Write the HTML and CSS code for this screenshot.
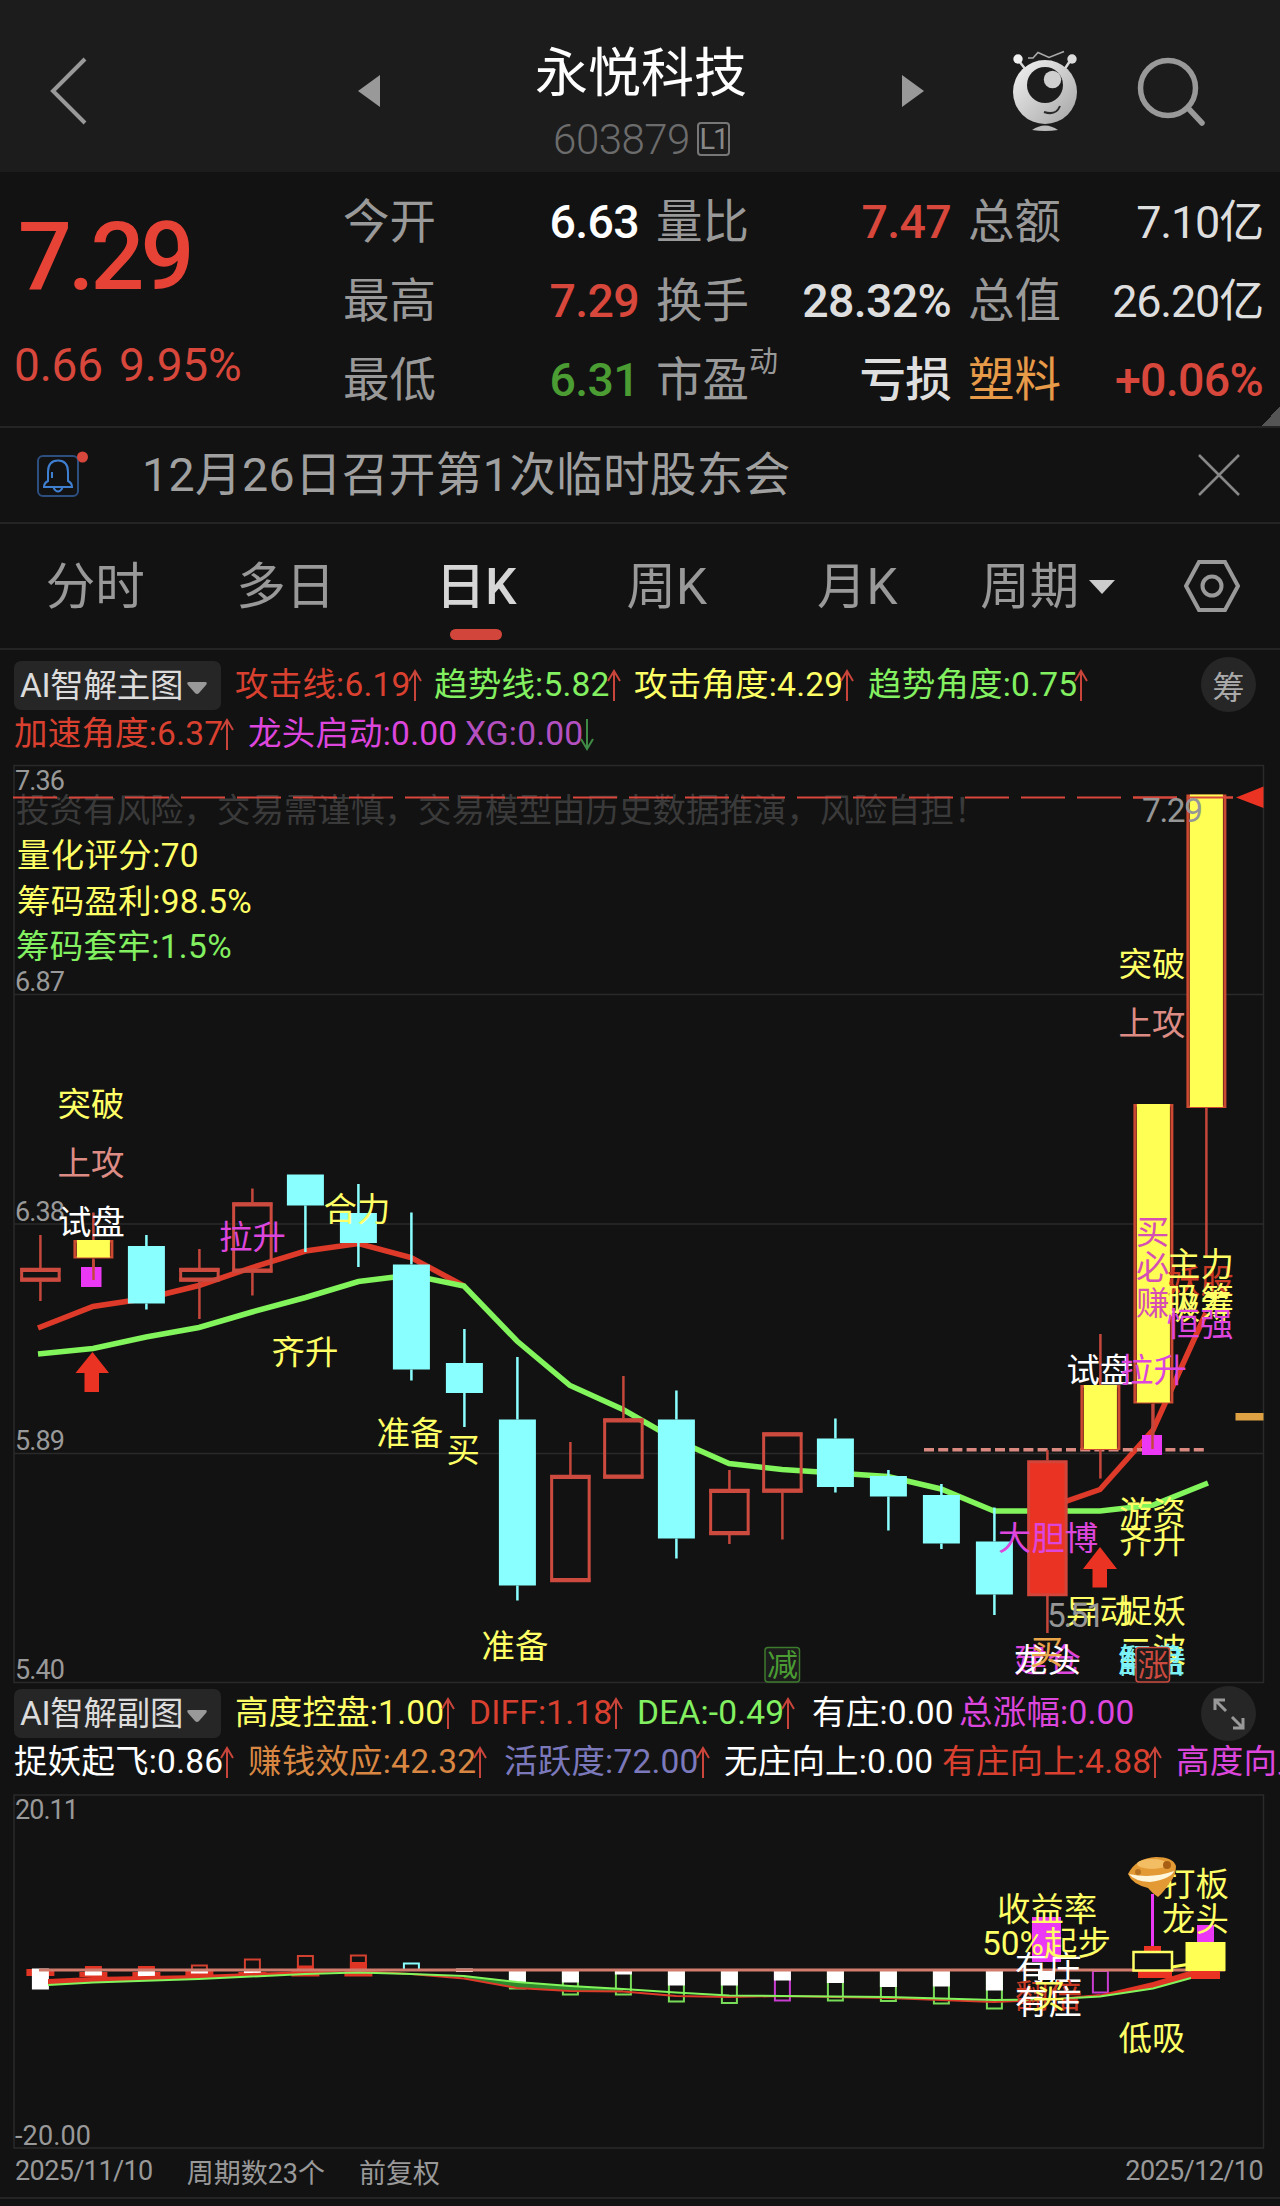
FILE: index.html
```html
<!DOCTYPE html>
<html lang="zh-CN">
<head>
  <meta charset="UTF-8">
  <title>永悦科技 603879</title>
  <link rel="stylesheet" href="styles.css">
</head>
<body>
  <header class="topbar">
    <svg class="back" width="40" height="70" viewBox="0 0 40 70"><path d="M36 3 L4 35 L36 67"/></svg>
    <svg class="prev" width="24" height="34" viewBox="0 0 24 34"><path d="M23 1 L1 17 L23 33Z"/></svg>
    <div class="stock">
      <h1>永悦科技</h1>
      <div class="code">603879<span class="level">L1</span></div>
    </div>
    <svg class="next" width="24" height="34" viewBox="0 0 24 34"><path d="M1 1 L23 17 L1 33Z"/></svg>
    <svg class="robot" width="70" height="84" viewBox="1010 48 70 84">
      <defs>
        <linearGradient id="body" x1="0" y1="0" x2="1" y2="1">
          <stop offset="0" stop-color="#f4f4f4"/>
          <stop offset="1" stop-color="#a4a4a4"/>
        </linearGradient>
      </defs>
      <path d="M1018 61 L1025 70 M1069 61 L1063 70" stroke="#d8d8d8" stroke-width="2.5"/>
      <circle cx="1017" cy="59" r="4.7" fill="#f0f0f0"/>
      <circle cx="1071" cy="59" r="4.7" fill="#dcdcdc"/>
      <path d="M1027 58 H1032 L1037 52.5 L1048 57.5 L1063 51.5" fill="none" stroke="#aaa" stroke-width="1.6"/>
      <circle cx="1044" cy="92" r="32" fill="url(#body)"/>
      <circle cx="1044" cy="85" r="18" fill="#1c1c1c"/>
      <circle cx="1051.500" cy="79.500" r="8.700" fill="#cfcfcf"/>
      <path d="M1043 112 Q1055 116 1059 106" fill="none" stroke="#2a2a2a" stroke-width="2"/>
      <path d="M1031 130 Q1044 121 1057 130 Q1044 132 1031 130Z" fill="#bbb"/>
    </svg>
    <svg class="search" width="70" height="70" viewBox="0 0 70 70"><circle cx="31" cy="31" r="27.500"/><path d="M51 51 L65 66"/></svg>
  </header>

  <section class="quote">
    <div class="price">
      <div class="now">7.29</div>
      <div class="change">0.66 9.95%</div>
    </div>
    <dl class="stats">
      <div><dt>今开</dt><dd class="white">6.63</dd></div>
      <div><dt>量比</dt><dd class="up">7.47</dd></div>
      <div><dt>总额</dt><dd class="big">7.10亿</dd></div>
      <div><dt>最高</dt><dd class="up">7.29</dd></div>
      <div><dt>换手</dt><dd>28.32%</dd></div>
      <div><dt>总值</dt><dd class="big">26.20亿</dd></div>
      <div><dt>最低</dt><dd class="down">6.31</dd></div>
      <div><dt>市盈<sup>动</sup></dt><dd>亏损</dd></div>
      <div><dt class="industry">塑料</dt><dd class="up">+0.06%</dd></div>
    </dl>
    <i class="corner"></i>
  </section>

  <section class="notice">
    <svg class="bell" width="54" height="50" viewBox="0 0 54 50">
      <rect x="2" y="6" width="40" height="40" rx="5" stroke="#2c4f80"/>
      <path d="M8 37 H36 Q36 33 32 31 V22 Q32 10.500 22 10.500 Q12 10.500 12 22 V31 Q8 33 8 37Z M17.500 38 Q22 45 26.500 38 M16 22 V28" stroke="#3f7fd0"/>
      <circle cx="46.500" cy="7" r="5.500" class="dot"/>
    </svg>
    <p>12月26日召开第1次临时股东会</p>
    <svg class="close" width="42" height="42" viewBox="0 0 42 42"><path d="M1 1 L41 41 M41 1 L1 41"/></svg>
  </section>

  <nav class="tabs">
    <a>分时</a>
    <a>多日</a>
    <a class="active">日K</a>
    <a>周K</a>
    <a>月K</a>
    <a>周期<i class="caret"></i></a>
    <svg width="56" height="52" viewBox="0 0 56 52"><path d="M15 2 H41 L54 26 L41 50 H15 L2 26Z"/><circle cx="28" cy="26" r="9.500"/></svg>
  </nav>

  <section class="indicator">
    <button class="pick">AI智解主图<svg width="22" height="14" viewBox="0 0 22 14"><path d="M3 1 H19 Q22 1 20 4 L13 12 Q11 14 9 12 L2 4 Q0 1 3 1Z"/></svg></button>
    <div class="row first">
      <span class="red w199">攻击线:6.19<b class="ar"></b></span>
      <span class="green w200">趋势线:5.82<b class="ar"></b></span>
      <span class="yellow w234">攻击角度:4.29<b class="ar"></b></span>
      <span class="green">趋势角度:0.75<b class="ar"></b></span>
    </div>
    <div class="row">
      <span class="red w234">加速角度:6.37<b class="ar"></b></span>
      <span class="magenta w217">龙头启动:0.00</span>
      <span class="purple">XG:0.00<b class="ar dn"></b></span>
    </div>
    <span class="round">筹</span>
  </section>

  <svg class="chart" id="main" width="1280" height="920" viewBox="0 764 1280 920">
    <g class="grid">
      <path d="M14 765.500 H1263.500 V1682.500 H14Z M14 994.500 H1263 M14 1224 H1263 M14 1453.500 H1263"/>
    </g>
    <g class="axis">
      <text x="15" y="790" textLength="50">7.36</text>
      <text x="15" y="991" textLength="50">6.87</text>
      <text x="15" y="1221" textLength="50">6.38</text>
      <text x="15" y="1450" textLength="50">5.89</text>
      <text x="15" y="1679" textLength="50">5.40</text>
    </g>
    <text class="risk" x="16" y="822">投资有风险，交易需谨慎，交易模型由历史数据推演，风险自担！</text>
    <path class="last" d="M13 797.500 H1233"/>
    <g class="score yellow">
      <text x="17" y="867">量化评分:70</text>
      <text x="17" y="912.500">筹码盈利:98.5%</text>
      <text x="16" y="958" class="green">筹码套牢:1.5%</text>
    </g>
    <path class="ma red-line" d="M38 1328 L93 1306.500 L146 1298.500 L199 1285.500 L252 1267.500 L305.500 1251 L358.500 1243.500 L411 1257.500 L464 1286"/>
    <path class="ma red-line" d="M1047 1513 V1508 L1100 1489.500 L1153 1430 L1206 1313"/>
    <path class="ma green-line" d="M38 1354 L93 1348.500 L146 1337 L199 1327.500 L252 1312 L305.500 1297.500 L358.500 1281.500 L411 1275 L464 1286 L517 1341 L570 1385.500 L623 1409.500 L676 1440 L729 1463.500 L782 1469.500 L835 1473 L888 1476.500 L941 1489 L994 1511 H1100 L1153 1505 L1208 1483"/>
    <g class="band"><path d="M924 1449.700 H1205"/></g>
    <g id="candles"></g>
    <g class="magenta-fill">
      <path d="M81 1267 H101.500 V1287 H81Z M1142 1435 H1162 V1455 H1142Z"/>
    </g>
    <path class="wick" d="M93.500 1260 V1280 M1152.500 1404 V1449"/>
    <path class="last" d="M1125 797.500 H1233" stroke-dashoffset="48"/>
    <g class="signal">
      <path d="M92.500 1352 L109 1373 H99 V1392 H84.500 V1373 H75.500Z"/>
      <path d="M1100 1547 L1117 1569 H1107 V1587.500 H1092.500 V1569 H1083Z"/>
      <path d="M1236 797.500 L1263.500 786.500 V808Z"/>
    </g>
    <path class="tick" d="M1235.500 1413 H1263.500 V1420.500 H1235.500Z"/>

    <g class="yellow">
      <text x="57.500" y="1116">突破</text>
      <text x="323.500" y="1221">合力</text>
      <text x="271.500" y="1364">齐升</text>
      <text x="376.500" y="1445">准备</text>
      <text x="446.500" y="1462">买</text>
      <text x="481.500" y="1658">准备</text>
      <text x="1118.500" y="976">突破</text>
      <text x="1119" y="1525">游资</text>
      <text x="1119" y="1553">齐升</text>
      <text x="1066" y="1623">异动</text>
      <text x="1119" y="1623">捉妖</text>
      <text x="1119" y="1662">二波</text>
    </g>
    <g class="pink">
      <text x="57.500" y="1175">上攻</text>
      <text x="1118.500" y="1035">上攻</text>
    </g>
    <g class="white-text">
      <text x="58" y="1234">试盘</text>
      <text x="1066.500" y="1381.500">试盘</text>
    </g>
    <g class="magenta">
      <text x="219" y="1249">拉升</text>
      <text x="1120" y="1382">拉升</text>
      <text x="998" y="1549.500">大胆博</text>
    </g>
    <g class="on-bar">
      <text x="1136" y="1244">买</text>
      <text x="1136" y="1279">必</text>
      <text x="1136" y="1315">赚</text>
    </g>
    <text class="red-text" x="1167" y="1293">妖股</text>
    <g class="yellow">
      <text x="1167" y="1276">主力</text>
      <text x="1167" y="1311">吸筹</text>
      <text x="1167" y="1319">吸筹</text>
    </g>
    <text class="magenta" x="1166.500" y="1336">恒强</text>
    <text class="tip" x="1142" y="822" textLength="61">7.29</text>
    <text class="tip" x="1047" y="1627" textLength="58">5.51</text>
    <text class="magenta" x="1014" y="1672">建仓</text>
    <text class="white-text" x="1014" y="1672">龙头</text>
    <text class="orange-text" x="1030" y="1664">买</text>
    <text class="cyan-text" x="1118" y="1672">解盘</text>
    <text class="cyan-text" x="1119" y="1673">翻倍</text>
    <g class="badge minus"><rect x="765" y="1647.500" width="34.500" height="34.500" rx="3"/><text x="767" y="1676">减</text></g>
    <g class="badge plus"><rect x="1136" y="1647.500" width="33.500" height="34.500" rx="3"/><text x="1137.500" y="1676">涨</text></g>
  </svg>

  <section class="indicator sub">
    <button class="pick">AI智解副图<svg width="22" height="14" viewBox="0 0 22 14"><path d="M3 1 H19 Q22 1 20 4 L13 12 Q11 14 9 12 L2 4 Q0 1 3 1Z"/></svg></button>
    <div class="row first">
      <span class="yellow w234">高度控盘:1.00<b class="ar"></b></span>
      <span class="red w168">DIFF:1.18<b class="ar"></b></span>
      <span class="green w174">DEA:-0.49<b class="ar"></b></span>
      <span class="white w147">有庄:0.00</span>
      <span class="magenta">总涨幅:0.00</span>
    </div>
    <div class="row">
      <span class="white w234">捉妖起飞:0.86<b class="ar"></b></span>
      <span class="orange w256">赚钱效应:42.32<b class="ar"></b></span>
      <span class="blue w220">活跃度:72.00<b class="ar"></b></span>
      <span class="white w218">无庄向上:0.00</span>
      <span class="red w234">有庄向上:4.88<b class="ar"></b></span>
      <span class="magenta">高度向上:0.00</span>
    </div>
    <span class="round"><svg width="32" height="32" viewBox="0 0 32 32"><path d="M2 12 V2 H12 M3 3 L13 13 M30 20 V30 H20 M29 29 L19 19"/></svg></span>
  </section>

  <svg class="chart" id="sub" width="1280" height="356" viewBox="0 1794 1280 356">
    <g class="grid"><path d="M14 1795 H1263.500 V2148 H14Z"/></g>
    <g class="axis">
      <text x="15" y="1819" textLength="64">20.11</text>
      <text x="15" y="2145" textLength="76">-20.00</text>
    </g>
    <g id="bars"></g>
    <path class="fill-up" d="M48 1979 L93 1977 L199 1975 L252 1973 L305 1971 L358 1970.500 L305 1974 L199 1979 L93 1982.500 L48 1985Z M1047 2000 L1100 1994.500 L1153 1982 L1206 1966 L1225 1970 L1191 1978 L1153 1988.500 L1100 1996.500Z"/>
    <path class="fill-down" d="M464 1976 L517 1982 L570 1986 L623 1989 V1992 L570 1991 L517 1988 L464 1978.500Z"/>
    <path class="thin red-line" d="M358 1971 L411 1974 L464 1978.500 L517 1988 L570 1991 L623 1991.500 L676 1996 L729 1997 L782 1996 L888 1998 L941 2000 L994 2002 L1047 2000 L1100 1995"/>
    <path class="thin green-line" d="M48 1985 L93 1982.500 L199 1979 L305 1974 L358 1972.500 L411 1974 L464 1976 L517 1982 L570 1986 L623 1989 L676 1992.500 L729 1995.500 L782 1996 L888 1997 L941 1998.500 L994 2000 L1047 1999.500 L1100 1996.500 L1153 1988.500 L1191 1978"/>
    <path class="zero" d="M39 1970 H1225"/>
    <path class="magenta-fill" d="M1032 1917 H1061 V1962 H1032Z M1197 1925 H1214 V1943 H1197Z M1151 1894 H1154 V1950 H1151Z"/>
    <path class="signal" d="M1144 1946 H1161 V1951 H1144Z M1138 1971 H1172 V1978 H1138Z M1191 1971 H1220 V1979 H1191Z"/>
    <path class="box21" d="M1133.500 1952 H1172 V1970.500 H1133.500Z"/>
    <path class="zero-end" d="M1172 1967 L1190 1964"/>
    <path class="box22" d="M1185.500 1942 H1225.500 V1971 H1185.500Z"/>
    <text class="white-text" x="1015" y="1980">有庄</text>
    <path class="white-fill" d="M1038 1971 H1055 V1980 H1038Z"/>
    <text class="red-text" x="1015" y="2008">翻倍</text>
    <text class="white-text" x="1015" y="2014">有庄</text>
    <g class="yellow">
      <text x="1032" y="2008">买</text>
      <text x="997" y="1921">收益率</text>
      <text x="982" y="1955">50%起步</text>
      <text x="1162" y="1896">打板</text>
      <text x="1162" y="1931">龙头</text>
      <text x="1118.500" y="2049.500">低吸</text>
    </g>
    <g class="ingot">
      <path d="M1128 1874 Q1136 1858 1156 1857 Q1173 1857 1176 1866 Q1176 1876 1170 1882 Q1164 1892 1158 1897 Q1152 1893 1148 1888 Q1132 1884 1128 1874Z" fill="#e39a35"/>
      <ellipse cx="1152" cy="1864" rx="15" ry="5" fill="#f3bd63"/>
      <path d="M1129 1874 Q1152 1879 1174 1871 Q1171 1879 1150 1882 Q1134 1881 1129 1874Z" fill="#fff6dc"/>
      <circle cx="1167" cy="1865" r="4" fill="#a85f14"/>
      <circle cx="1138" cy="1872" r="3" fill="#b87322"/>
    </g>
  </svg>

  <footer class="dates">
    <span class="date">2025/11/10</span>
    <span>周期数23个</span>
    <span>前复权</span>
    <span class="date end">2025/12/10</span>
  </footer>

  <script>
    // x centre of day i
    const cx = i => 40.4 + 53 * i;

    // type, body top, body bottom, wick top, wick bottom
    const days = [
      ['hollow', 1268, 1281.5, 1235, 1301],
      ['hot', 1240, 1258.5, 1212.5, 1280],
      ['fall', 1246, 1303.5, 1235, 1309.5],
      ['hollow', 1268, 1281.5, 1249, 1319],
      ['hollow', 1202.5, 1272.5, 1188.5, 1295.5],
      ['fall', 1174.5, 1205.5, 1174.5, 1252],
      ['fall', 1213, 1243, 1184, 1267],
      ['fall', 1264.5, 1369.5, 1212.5, 1380.5],
      ['fall', 1363, 1393, 1329, 1427],
      ['fall', 1419.5, 1585.5, 1357, 1600.5],
      ['hollow', 1475, 1582, 1442, 1582],
      ['hollow', 1418.5, 1478.5, 1376, 1478.5],
      ['fall', 1419.5, 1538.5, 1390.5, 1558.5],
      ['hollow', 1489, 1535, 1470, 1544],
      ['hollow', 1432.5, 1492.5, 1432.5, 1539.5],
      ['fall', 1438.5, 1487, 1418.5, 1492.5],
      ['fall', 1476, 1496.5, 1470, 1530.5],
      ['fall', 1495, 1543.5, 1484, 1549],
      ['fall', 1541.5, 1594.5, 1507.5, 1615],
      ['solid', 1460.5, 1596, 1450, 1633],
      ['hot', 1385, 1450, 1334, 1478.5],
      ['hot', 1104, 1403.5, 1104, 1450],
      ['hot', 794.5, 1108, 794.5, 1256]
    ];

    let out = '';
    days.forEach(([type, top, bottom, high, low], i) => {
      const x = cx(i);
      const w = type === 'fall' ? 37 : 40;
      const wick = type === 'fall' ? 'wick-fall' : 'wick';
      out += `<path class="${wick}" d="M${x} ${high} V${top} M${x} ${bottom} V${low}"/>`;
      if (type === 'fall') {
        out += `<rect class="fall" x="${x - w / 2}" y="${top}" width="${w}" height="${bottom - top}"/>`;
      } else {
        out += `<rect class="${type}" x="${x - w / 2 + 1.25}" y="${top + 1.25}" width="${w - 2.5}" height="${bottom - top - 2.5}"/>`;
      }
      if (type === 'hollow') {
        out += `<path class="edge" d="M${x - w / 2} ${top + 2} h${w} M${x - w / 2} ${bottom - 2} h${w}"/>`;
      }
      if (type === 'hot') {
        out += `<rect class="hot-core" x="${x - 16.5}" y="${top}" width="33" height="${bottom - top - 1}"/>`;
      }
    });
    document.getElementById('candles').innerHTML = out;

    // sub chart: day, class, top, bottom, width
    const bars = [
      [0, 'b-red', 1969, 1976, 28], [0, 'b-white', 1968.5, 1989.5, 17],
      [1, 'b-red', 1966, 1970, 17], [1, 'b-red', 1972, 1977, 28], [1, 'b-white', 1970.5, 1975.5, 17],
      [2, 'b-red', 1966, 1970, 17], [2, 'b-red', 1972, 1977, 28], [2, 'b-white', 1970.5, 1981, 17],
      [3, 'o-red', 1964.5, 1972, 17], [3, 'b-red', 1971, 1977, 28], [3, 'b-white', 1970.5, 1973.5, 17],
      [4, 'o-red', 1958.5, 1971, 17], [4, 'b-red', 1972, 1976, 28], [4, 'b-white', 1970.5, 1973.5, 17],
      [5, 'o-red', 1955, 1971, 17], [5, 'b-red', 1965.5, 1970, 17], [5, 'b-red', 1971, 1976.5, 28],
      [6, 'o-red', 1954.5, 1971, 17], [6, 'b-red', 1962, 1970, 17], [6, 'b-red', 1971, 1976.5, 28],
      [7, 'o-cyan', 1962.5, 1971, 17],
      [8, 'b-white', 1968.5, 1972, 17],
      [9, 'o-green', 1970, 1989.5, 17], [9, 'b-white', 1969, 1985, 17],
      [10, 'o-green', 1970, 1995.5, 17], [10, 'b-white', 1969, 1982.5, 17],
      [11, 'o-green', 1970, 1995.5, 17], [11, 'b-white', 1969, 1974.5, 17],
      [12, 'o-green', 1970, 2002.5, 17], [12, 'b-white', 1969, 1985.5, 17],
      [13, 'o-green', 1970, 2004, 17], [13, 'b-white', 1969, 1985.5, 17],
      [14, 'o-magenta', 1970, 2001.5, 17], [14, 'b-white', 1969, 1980.5, 17],
      [15, 'o-green', 1970, 2001.5, 17], [15, 'b-white', 1969, 1983, 17],
      [16, 'o-green', 1970, 2002, 17], [16, 'b-white', 1969, 1987, 17],
      [17, 'o-green', 1970, 2004.5, 17], [17, 'b-white', 1969, 1986.5, 17],
      [18, 'o-green', 1970, 2009.5, 17], [18, 'b-white', 1969, 1990.5, 17],
      [20, 'o-magenta', 1970, 1993.5, 17]
    ];
    document.getElementById('bars').innerHTML = bars.map(([i, cls, top, bottom, w]) => {
      const o = cls[0] === 'o' ? 1 : 0;
      return `<rect class="${cls}" x="${cx(i) - w / 2 + o}" y="${top + o}" width="${w - 2 * o}" height="${bottom - top - 2 * o}"/>`;
    }).join('');

    // trend arrows behind the values
    document.querySelectorAll('.ar').forEach(el => {
      el.innerHTML = '<svg width="14" height="33" viewBox="0 0 14 33"><path d="M7 32 V2 M1 12 L7 2 L13 12"/></svg>';
    });
  </script>
</body>
</html>
```
FILE: styles.css
```css
* {
  box-sizing: border-box;
}
body {
  margin: 0;
  width: 1280px;
  height: 2206px;
  overflow: hidden;
  background: #121212;
  color: #dedede;
  font-family: Roboto, "Noto Sans CJK SC", sans-serif;
}
h1, p, dl, dd {
  margin: 0;
  font-weight: 400;
}
svg {
  display: block;
  flex: none;
}

/* top bar */
.topbar {
  height: 172px;
  background: #1c1c1c;
  display: flex;
  align-items: flex-start;
  padding-left: 49px;
}
.back {
  margin-top: 56px;
  fill: none;
  stroke: #999;
  stroke-width: 4;
}
.prev, .next {
  margin-top: 74px;
  fill: #999;
}
.prev {
  margin-left: 268px;
}
.stock {
  width: 520px;
  padding-top: 36px;
  text-align: center;
}
.stock h1 {
  font-size: 53px;
  line-height: 76px;
  color: #fff;
}
.code {
  display: flex;
  justify-content: center;
  align-items: center;
  gap: 7px;
  height: 54px;
  font-size: 42px;
  font-weight: 300;
  letter-spacing: -0.5px;
  color: #6c6c6c;
  padding-left: 1px;
}
.level {
  width: 33px;
  height: 34px;
  border: 2px solid #777;
  border-radius: 4px;
  font-size: 29px;
  font-weight: 400;
  line-height: 31px;
  letter-spacing: -2px;
  color: #888;
}
.robot {
  margin: 48px 0 0 86px;
}
.search {
  margin: 57px 0 0 56px;
  fill: none;
  stroke: #999;
  stroke-width: 5.500;
  stroke-linecap: round;
}

/* quote */
.quote {
  position: relative;
  height: 256px;
  border-bottom: 2px solid #242424;
  display: flex;
}
.price {
  width: 343px;
  color: #d8473b;
}
.now {
  padding: 35px 0 0 18px;
  font-size: 95px;
  line-height: 100px;
  font-weight: 500;
  letter-spacing: -4px;
  color: #e64236;
}
.change {
  padding: 31px 0 0 14px;
  font-size: 46px;
  line-height: 54px;
  letter-spacing: -0.2px;
  word-spacing: 5px;
}
.stats {
  display: grid;
  grid-template-columns: 296px 295px 295px;
  grid-template-rows: repeat(3, 79px);
  column-gap: 17px;
  padding-top: 11px;
}
.stats div {
  display: flex;
  justify-content: space-between;
  align-items: center;
}
.stats dt, .stats dd {
  font-size: 46.500px;
  line-height: 79px;
  white-space: nowrap;
}
.stats dt {
  color: #999;
}
.stats dd {
  letter-spacing: -0.7px;
  font-weight: 500;
}
.stats .big {
  font-size: 45px;
  font-weight: 400;
  letter-spacing: -1.2px;
}
sup {
  font-size: 29px;
  line-height: 0;
  vertical-align: 24px;
}
.stats .industry {
  color: #e79a48;
}
.stats .up {
  color: #d8473b;
}
.stats .down {
  color: #4a9c33;
}
.white, .stats .white {
  color: #fff;
}
.corner {
  position: absolute;
  right: 0;
  bottom: 0;
  width: 18px;
  height: 20px;
  background: linear-gradient(to bottom right, transparent 50%, #555 50%);
}

/* notice */
.notice {
  height: 96px;
  border-bottom: 2px solid #242424;
  display: flex;
  align-items: center;
  padding: 0 40px 0 36px;
  color: #a0a0a0;
}
.notice p {
  flex: 1;
  padding-left: 52px;
  font-size: 46.500px;
  letter-spacing: 0.4px;
  line-height: 60px;
}
.bell {
  fill: none;
  stroke-width: 2;
}
.dot {
  fill: #d8473b;
}
.close {
  stroke: #888;
  stroke-width: 2.500;
}

/* tabs */
.tabs {
  height: 126px;
  border-bottom: 2px solid #242424;
  display: grid;
  grid-template-columns: repeat(6, 190.500px) 137px;
  align-items: center;
  justify-items: center;
  font-size: 49.500px;
  color: #999;
}
.tabs a {
  position: relative;
  top: 1px;
  line-height: 124px;
}
.tabs .active {
  color: #d6d6d6;
  font-weight: 500;
}
.tabs .active::after {
  content: "";
  position: absolute;
  left: 50%;
  top: 104px;
  width: 52px;
  height: 11px;
  margin-left: -26px;
  border-radius: 6px;
  background: #d2453a;
}
.caret {
  display: inline-block;
  margin-left: 10px;
  vertical-align: 10px;
  border: 13px solid transparent;
  border-top: 14px solid #ccc;
  border-bottom: 0;
}
.tabs svg {
  fill: none;
  stroke: #999;
  stroke-width: 4;
}

/* indicator values */
.indicator {
  position: relative;
  height: 114px;
  padding-top: 11px;
  display: grid;
  grid-template-columns: 235px 1fr;
  grid-template-rows: 49px 49px;
  overflow: hidden;
}
.sub {
  height: 110px;
  padding-top: 5px;
}
.pick {
  width: 207px;
  height: 49px;
  margin-left: 14px;
  padding: 0 0 6px 6px;
  border: 0;
  border-radius: 7px;
  background: #262626;
  color: #dcdcdc;
  font: 33.500px Roboto, "Noto Sans CJK SC", sans-serif;
  letter-spacing: -0.3px;
  display: flex;
  align-items: center;
  white-space: nowrap;
}
.pick svg {
  margin: 10px 0 0 3px;
  fill: #999;
}
.row {
  grid-column: 1 / 3;
  padding-left: 14px;
  display: flex;
  font-size: 33.500px;
  letter-spacing: 0.2px;
  line-height: 48px;
  white-space: nowrap;
}
.row.first {
  grid-column: 2;
  padding-left: 0;
}
.row span {
  flex: none;
  display: flex;
}
.ar {
  width: 14px;
  margin: 8px 0 0 -3px;
}
.ar svg {
  fill: none;
  stroke: #c9443a;
  stroke-width: 2;
}
.ar.dn svg {
  transform: rotate(180deg);
  stroke: #3f8a45;
}
.w147 { width: 147px; }
.w168 { width: 168px; }
.w174 { width: 175px; }
.w199 { width: 199px; }
.w200 { width: 200px; }
.w217 { width: 217px; }
.w218 { width: 218px; }
.w220 { width: 220px; }
.w234 { width: 234px; }
.w256 { width: 256px; }
.round {
  position: absolute;
  right: 24px;
  top: 7px;
  width: 55px;
  height: 55px;
  border-radius: 50%;
  background: #262626;
  color: #aaa;
  font-size: 32px;
  display: flex;
  align-items: center;
  justify-content: center;
}
.sub .round {
  top: 2px;
}
.round svg {
  fill: none;
  stroke: #999;
  stroke-width: 3;
}
.red { color: #d9402f; }
.green { color: #82f060; fill: #82f060; }
.yellow { color: #ffff66; fill: #ffff66; }
.magenta { color: #dc46dc; fill: #dc46dc; }
.purple { color: #b450c0; }
.orange { color: #d88743; }
.blue { color: #7b79bb; }

/* charts */
.chart {
  font-size: 33.400px;
}
.grid {
  fill: none;
  stroke: #2a2a2a;
  stroke-width: 1.500;
}
.axis {
  font-size: 27px;
  fill: #999;
}
.risk {
  font-size: 33.500px;
  fill: #3a3a3a;
}
.score {
  letter-spacing: 0.4px;
}
.last {
  stroke: #d8473b;
  stroke-width: 2;
  stroke-dasharray: 44 12;
}
.ma {
  fill: none;
  stroke-width: 5.500;
}
.thin {
  fill: none;
  stroke-width: 2;
}
.red-line { stroke: #dd3a2a; }
.green-line { stroke: #82f45c; }
.band {
  stroke: #d98980;
  stroke-width: 3.500;
  stroke-dasharray: 10 4.200;
}
.wick { stroke: #c5473c; stroke-width: 2.500; }
.wick-fall { stroke: #8affff; stroke-width: 2.500; }
.fall { fill: #8affff; }
.hollow { fill: none; stroke: #cc4a3e; stroke-width: 3; }
.edge { stroke: #cc4a3e; stroke-width: 4; }
.solid { fill: #eb3323; stroke: #d2453a; stroke-width: 3; }
.hot { fill: #7c2c1c; stroke: #cc4a32; stroke-width: 2.500; }
.hot-core { fill: #ffff54; }
.magenta-fill { fill: #ea38f4; }
.white-fill { fill: #fff; }
.signal { fill: #eb3323; }
.tick { fill: #dda043; }
.pink { fill: #dc8c84; }
.on-bar { fill: #d650b4; }
.white-text { fill: #fff; }
.red-text { fill: #c93a24; }
.orange-text { fill: #e8a54a; }
.cyan-text { fill: #7df2f6; }
.tip { fill: #969696; }
.badge {
  font-size: 31px;
}
.badge rect {
  fill: #1c1c1c;
  stroke-width: 1.500;
}
.minus { fill: #4a9c33; }
.minus rect { stroke: #3c7a2c; }
.plus { fill: #cc4a3e; }
.plus rect { stroke: #cc4a3e; }

.zero { stroke: #d27c6e; stroke-width: 3; }
.zero-end { stroke: #ffff54; stroke-width: 3; }
.fill-up { fill: #e03424; }
.fill-down { fill: #2e8a2a; }
.box21 { fill: #121212; stroke: #ffff66; stroke-width: 2.500; }
.box22 { fill: #ffff54; }
.b-red { fill: #e03424; }
.b-white { fill: #fff; }
.o-red, .o-green, .o-cyan, .o-magenta {
  fill: none;
  stroke-width: 2;
}
.o-red { stroke: #d2402f; }
.o-green { stroke: #78dc58; }
.o-cyan { stroke: #8affff; }
.o-magenta { stroke: #c83cd0; }

/* dates */
.dates {
  height: 49px;
  border-bottom: 2px solid #242424;
  padding: 0 17px 0 15px;
  display: flex;
  align-items: center;
  font-size: 27px;
  color: #999;
}
.dates span {
  margin-right: 34px;
  padding-bottom: 5px;
}
.dates .date {
  letter-spacing: -0.6px;
}
.dates .end {
  margin: 0 0 0 auto;
}
```
